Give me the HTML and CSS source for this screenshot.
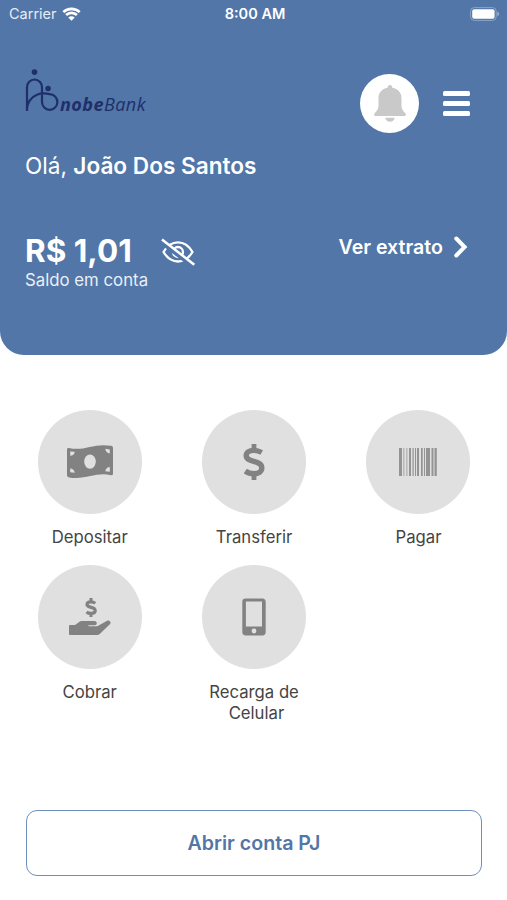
FILE: index.html
```
<!DOCTYPE html>
<html lang="pt-BR">
<head>
    <meta charset="UTF-8">
    <meta name="viewport" content="width=device-width, initial-scale=1.0">
    <title>nobeBank</title>
    <link rel="stylesheet" href="styles.css">
</head>
<body>
    <header class="header">
        <div class="status-bar">
            <div class="carrier">
                <span>Carrier</span>
                <svg class="wifi" width="19" height="14" viewBox="0 0 19 14">
                    <path d="M1.3 5.100a11.800 11.800 0 0 1 16.400 0M4.100 8a7.700 7.700 0 0 1 10.800 0" fill="none" stroke="#fff" stroke-width="2.7"/>
                    <path d="M9.500 13.800 6.300 10.500a4.600 4.600 0 0 1 6.400 0z" fill="#fff"/>
                </svg>
            </div>
            <div class="clock">8:00 AM</div>
            <svg class="battery" width="31" height="14" viewBox="0 0 31 14">
                <rect x=".6" y=".6" width="25.6" height="12.8" rx="3.6" fill="none" stroke="#8aa5c9" stroke-width="1"/>
                <rect x="2.2" y="2.2" width="22.4" height="9.6" rx="2" fill="#fff"/>
                <path d="M27.4 4.6v4.8c2.2-.9 2.2-3.9 0-4.8z" fill="#9db4d2"/>
            </svg>
        </div>
        <div class="top">
            <div class="logo">
                <svg width="34" height="44" viewBox="0 0 34 44">
                    <circle cx="9.5" cy="3.1" r="2.8" fill="#1f2f6b"/>
                    <circle cx="23.1" cy="19.5" r="2.7" fill="#1f2f6b"/>
                    <path d="M2 42V18.500a7.500 8 0 0 1 15 0V33a7.700 7.900 0 1 0 7.700-7.900C21 24.200 16 24 12.500 25.500 6.500 28 2.500 33 2 40" fill="none" stroke="#1f2f6b" stroke-width="2.200"/>
                </svg>
                <span class="logo-text"><b>nobe</b>Bank</span>
            </div>
            <div class="actions">
                <div class="bell">
                    <svg width="32" height="37" viewBox="0 0 32 37">
                        <path d="M16 0c1.500 0 2.300 1.200 2.300 2.800 5.700 1.200 9.200 4.700 9.200 10.200v7.500c0 4 1.800 5.300 4 8 .9 1.400.2 2.500-1.300 2.500H1.800C.3 31-.4 29.900.5 28.500c2.200-2.700 4-4 4-8V13c0-5.500 3.500-9 9.200-10.200C13.700 1.200 14.500 0 16 0zM11.300 32.800h9.400c-.6 2.500-2.300 4-4.700 4s-4.100-1.500-4.700-4z" fill="#c9c9c9"/>
                    </svg>
                </div>
                <div class="menu"><span></span><span></span><span></span></div>
            </div>
        </div>
        <div class="hello">Olá, <b>João Dos Santos</b></div>
        <div class="account">
            <div>
                <div class="balance">
                    <span class="amount">R$ 1,01</span>
                    <svg width="36" height="30" viewBox="0 0 36 30">
                        <g fill="none" stroke="#fff" stroke-width="2.300">
                            <path d="M3.500 15C7.500 8 12 5.300 18 5.300S28.500 8 32.500 15C28.500 21.500 24 24.500 18 24.500S7.500 21.500 3.500 15z" stroke-linejoin="round"/>
                            <circle cx="18" cy="15" r="5"/>
                        </g>
                        <path d="m2 5.800 31 23.800" stroke="#5176a7" stroke-width="4"/>
                        <path d="m2 2.400 32.300 25.400" stroke="#fff" stroke-width="2.500"/>
                    </svg>
                </div>
                <div class="caption">Saldo em conta</div>
            </div>
            <div class="statement">
                <span>Ver extrato</span>
                <svg width="14" height="22" viewBox="0 0 14 22">
                    <path d="m2.300 2.500 8.300 8.500-8.300 8.500" fill="none" stroke="#fff" stroke-width="4" stroke-linecap="round"/>
                </svg>
            </div>
        </div>
    </header>
    <main>
        <div class="services">
            <div class="service">
                <div class="circle">
                    <svg width="46" height="34" viewBox="0 0 46 34">
                        <path d="M0 4.600C0 3.300.8 2.700 2 3c15 3.500 25-5.300 42-2.200 1.300.2 2 1 2 2.200v25.500c0 1.300-.8 2-2 1.700-15-3.500-25 5-42 2.200C.8 32.200 0 31.300 0 30z" fill="#828282"/>
                        <ellipse cx="23" cy="16.600" rx="5.800" ry="7.200" fill="#e0e0e0"/>
                        <path d="M3.200 6.400l4.500.4c-.2 2.400-2 4-4.500 4zM3.200 23.600c2.500 0 4.300 1.600 4.500 4.200l-4.500-.5zM42.800 4.500l-4.500-.7c.2 2.700 2 4.500 4.500 4.700zM42.800 22c-2.500 0-4.100 1.700-4.500 4.200l4.500.5z" fill="#e0e0e0"/>
                    </svg>
                </div>
                <div class="label">Depositar</div>
            </div>
            <div class="service">
                <div class="circle">
                    <svg width="22" height="38" viewBox="0 0 22 38">
                        <path d="M11 1v6M11 31v6" stroke="#828282" stroke-width="4.800"/>
                        <path d="M18.700 9.500C16 8 13.500 7.400 10.500 7.400 6.500 7.400 3.200 9.200 3.200 12.600c0 3.400 2.800 4.500 7.600 5.800 5 1.400 8 2.700 8 6.400 0 4-3.400 5.900-7.800 5.900-3.500 0-6.200-.9-8.700-2.700" fill="none" stroke="#828282" stroke-width="5.400"/>
                    </svg>
                </div>
                <div class="label">Transferir</div>
            </div>
            <div class="service">
                <div class="circle">
                    <svg width="38" height="28" viewBox="0 0 38 28">
                        <path d="M0 0h3v28H0zM4.500 0h.8v28h-.8zM7.500 0h.8v28h-.8zM10 0h2v28h-2zM13.500 0h1.200v28h-1.200zM16 0h1v28h-1zM18 0h2v28h-2zM22 0h1.700v28H22zM25 0h1v28h-1zM27 0h4v28h-4zM32.500 0h2v28h-2zM35.500 0h2.300v28h-2.300z" fill="#949494"/>
                    </svg>
                </div>
                <div class="label">Pagar</div>
            </div>
            <div class="service">
                <div class="circle">
                    <svg width="42" height="38" viewBox="0 0 42 38">
                        <path d="M22 0v3.500M22 15.500V19" stroke="#828282" stroke-width="3"/>
                        <path d="M26.300 5.200C25 4.300 23.500 3.800 22 3.800c-2.200 0-4 .9-4 2.700 0 1.700 1.500 2.200 4.200 2.900 2.600.7 4 1.400 4 3.100 0 2-1.900 2.900-4.100 2.900-1.900 0-3.400-.5-4.600-1.500" fill="none" stroke="#828282" stroke-width="3.200"/>
                        <path d="M0 28.300c0-.8.500-1.300 1.300-1.300H6l3.500-2.600c1.300-1 2.500-1.400 4-1.400h12c3 0 3 4.200.2 4.200H20c-1.200 0-1.200 1 0 1h7.500c1 0 1.800-.3 2.600-.9l7.600-4.400c2.600-1.500 5 1.200 3.200 3.300L31 35.700c-1 .9-2 1.300-3.400 1.300H1.300C.5 37 0 36.500 0 35.700z" fill="#828282"/>
                    </svg>
                </div>
                <div class="label">Cobrar</div>
            </div>
            <div class="service">
                <div class="circle">
                    <svg width="24" height="38" viewBox="0 0 24 38">
                        <path d="M3.500.5h17c2 0 3.200 1.300 3.200 3.200v30.600c0 2-1.200 3.200-3.200 3.200h-17c-2 0-3.200-1.300-3.200-3.200V3.700C.3 1.700 1.500.5 3.500.5zm.4 3v25H20v-25z" fill="#828282" fill-rule="evenodd"/>
                        <circle cx="12" cy="33" r="2.400" fill="#e0e0e0"/>
                    </svg>
                </div>
                <div class="label">Recarga de<br>&nbsp;Celular</div>
            </div>
        </div>
        <button class="open-account">Abrir conta PJ</button>
    </main>
</body>
</html>
```
FILE: styles.css
```
*{
    margin: 0;
    padding: 0;
    box-sizing: border-box;
}
body {
    font-family: Inter, "Liberation Sans", sans-serif;
    background-color: #fff;
    height: 900px;
    display: flex;
    flex-direction: column;
}
svg {
    display: block;
    flex-shrink: 0;
}
.header {
    height: 355px;
    background-color: #5176a7;
    color: white;
    border-radius: 0 0 24px 24px;
}
.status-bar {
    display: grid;
    grid-template-columns: 1fr auto 1fr;
    align-items: center;
    height: 27px;
    padding: 0 6px 0 9px;
    font-size: 14.5px;
}
.carrier {
    display: flex;
    align-items: center;
    gap: 5px;
    color: #e6edf6;
}
.clock {
    font-weight: 600;
    font-size: 14.5px;
}
.battery {
    justify-self: end;
}
.top {
    display: flex;
    justify-content: space-between;
    padding: 42px 37px 0 25px;
    height: 106px;
}
.logo {
    display: flex;
    align-items: flex-start;
    color: #1f2f6b;
}
.logo-text {
    font-family: "Open Sans", sans-serif;
    font-style: italic;
    font-size: 18px;
    line-height: 24px;
    letter-spacing: 0.45px;
    margin: 23px 0 0 1px;
}
.actions {
    display: flex;
    align-items: center;
    gap: 24px;
    height: 59px;
    margin-top: 5px;
}
.bell {
    width: 59px;
    height: 59px;
    border-radius: 50%;
    background-color: white;
    display: flex;
    justify-content: center;
    align-items: center;
}
.menu {
    width: 27px;
    display: flex;
    flex-direction: column;
    gap: 5px;
}
.menu span {
    height: 4.8px;
    border-radius: 1.5px;
    background-color: white;
}
.hello {
    margin-top: 19px;
    padding-left: 25px;
    font-size: 22.6px;
    line-height: 28px;
}
.hello b {
    font-weight: 600;
}
.account {
    display: flex;
    justify-content: space-between;
    padding: 50px 39px 0 25px;
}
.balance {
    display: flex;
    align-items: center;
    gap: 28px;
    height: 40px;
}
.balance svg {
    margin-top: 4px;
}
.amount {
    font-size: 31.5px;
    font-weight: 700;
}
.caption {
    font-size: 16.8px;
    line-height: 20px;
    color: #e9eff7;
}
.statement {
    display: flex;
    align-items: center;
    gap: 11px;
    height: 34px;
    font-size: 19.6px;
    font-weight: 600;
}
main {
    flex: 1;
    display: flex;
    flex-direction: column;
    padding: 55px 7px 24px;
}
.services {
    display: grid;
    grid-template-columns: repeat(3, 164.4px);
    grid-auto-rows: 155px;
    padding-left: 0.5px;
}
.service {
    display: flex;
    flex-direction: column;
    align-items: center;
}
.circle {
    width: 104px;
    height: 104px;
    flex-shrink: 0;
    border-radius: 50%;
    background-color: #e0e0e0;
    display: flex;
    justify-content: center;
    align-items: center;
}
.label {
    margin-top: 13px;
    font-size: 16.7px;
    line-height: 21px;
    text-align: center;
    color: #444;
}
.open-account {
    margin: auto 18px 0 19px;
    height: 66px;
    border: 1.5px solid #6f8fbb;
    border-radius: 11px;
    background-color: white;
    color: #5176a7;
    font-family: inherit;
    font-size: 19.6px;
    font-weight: 600;
    cursor: pointer;
}
```
